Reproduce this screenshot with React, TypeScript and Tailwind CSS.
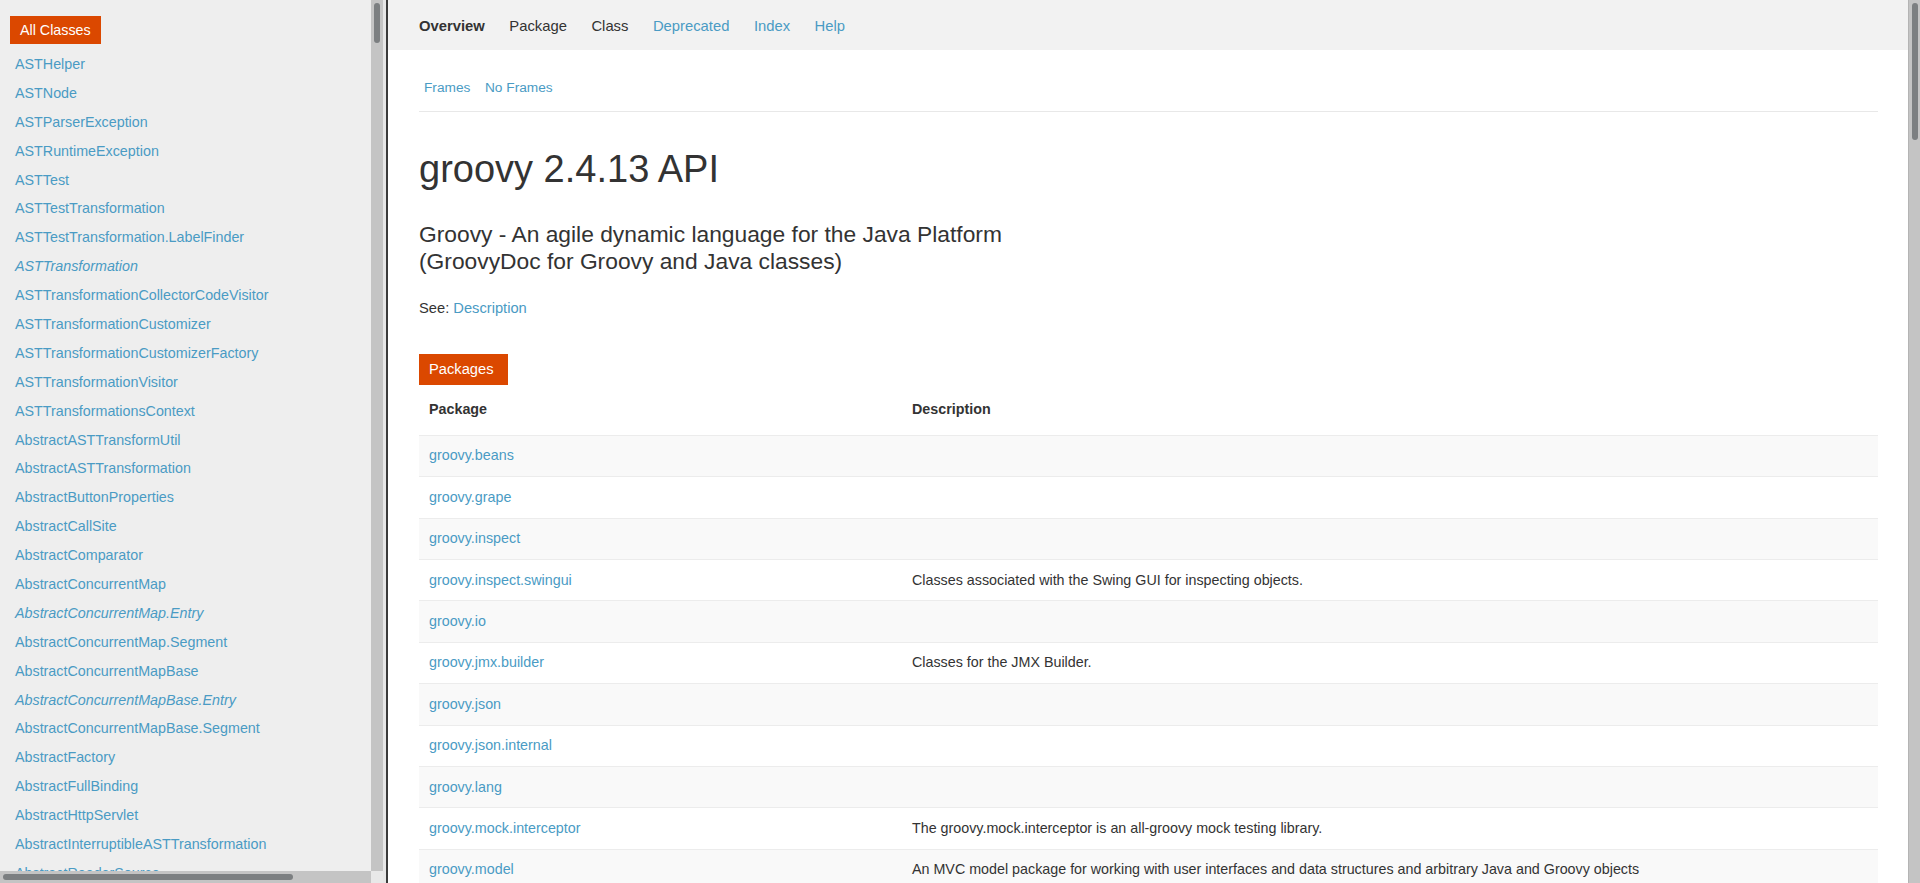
import React from "react";

type ClassItem = { name: string; italic?: boolean };

const classes: ClassItem[] = [
  { name: "ASTHelper" },
  { name: "ASTNode" },
  { name: "ASTParserException" },
  { name: "ASTRuntimeException" },
  { name: "ASTTest" },
  { name: "ASTTestTransformation" },
  { name: "ASTTestTransformation.LabelFinder" },
  { name: "ASTTransformation", italic: true },
  { name: "ASTTransformationCollectorCodeVisitor" },
  { name: "ASTTransformationCustomizer" },
  { name: "ASTTransformationCustomizerFactory" },
  { name: "ASTTransformationVisitor" },
  { name: "ASTTransformationsContext" },
  { name: "AbstractASTTransformUtil" },
  { name: "AbstractASTTransformation" },
  { name: "AbstractButtonProperties" },
  { name: "AbstractCallSite" },
  { name: "AbstractComparator" },
  { name: "AbstractConcurrentMap" },
  { name: "AbstractConcurrentMap.Entry", italic: true },
  { name: "AbstractConcurrentMap.Segment" },
  { name: "AbstractConcurrentMapBase" },
  { name: "AbstractConcurrentMapBase.Entry", italic: true },
  { name: "AbstractConcurrentMapBase.Segment" },
  { name: "AbstractFactory" },
  { name: "AbstractFullBinding" },
  { name: "AbstractHttpServlet" },
  { name: "AbstractInterruptibleASTTransformation" },
  { name: "AbstractReaderSource" },
];

const packages: [string, string][] = [
  ["groovy.beans", ""],
  ["groovy.grape", ""],
  ["groovy.inspect", ""],
  ["groovy.inspect.swingui", "Classes associated with the Swing GUI for inspecting objects."],
  ["groovy.io", ""],
  ["groovy.jmx.builder", "Classes for the JMX Builder."],
  ["groovy.json", ""],
  ["groovy.json.internal", ""],
  ["groovy.lang", ""],
  ["groovy.mock.interceptor", "The groovy.mock.interceptor is an all-groovy mock testing library."],
  ["groovy.model", "An MVC model package for working with user interfaces and data structures and arbitrary Java and Groovy objects"],
];

const font = "font-['Liberation_Sans',Arial,sans-serif]";

const LeftFrame = () => (
  <div className="w-[383px] h-full flex flex-col bg-[#eeeeee] shrink-0">
    <div className="flex flex-1 min-h-0">
      <div className="flex-1 overflow-hidden pt-[16px]">
        <div className="ml-[10px] inline-block bg-[#db4800] text-white text-[14.3px] leading-[28px] h-[28px] px-[10px]">
          All Classes
        </div>
        <ul className="mt-[6px] whitespace-nowrap">
          {classes.map((c) => (
            <li
              key={c.name}
              className={`h-[28.9px] leading-[28.9px] pl-[15px] text-[14.3px] text-[#4a9bc4] ${c.italic ? "italic" : ""}`}
            >
              {c.name}
            </li>
          ))}
        </ul>
      </div>
      <div className="w-[12px] bg-[#c4c4c4] pt-[3px] flex justify-center">
        <div className="w-[6px] h-[40px] rounded-full bg-[#7c7f81]" />
      </div>
    </div>
    <div className="h-[12px] flex">
      <div className="flex-1 bg-[#c4c4c4] pt-[3px] pl-[3px]">
        <div className="w-[290px] h-[6px] rounded-full bg-[#7c7f81]" />
      </div>
      <div className="w-[12px] bg-[#e8e8e8]" />
    </div>
  </div>
);

const Nav = () => (
  <div className="h-[50px] bg-[#f2f2f2] flex items-center gap-[24.5px] pl-[31px] pt-[3px] text-[14.8px]">
    <span className="font-bold text-[#333333]">Overview</span>
    <span className="text-[#333333]">Package</span>
    <span className="text-[#333333]">Class</span>
    <span className="text-[#4a9bc4]">Deprecated</span>
    <span className="text-[#4a9bc4]">Index</span>
    <span className="text-[#4a9bc4]">Help</span>
  </div>
);

const RightFrame = () => (
  <div className="flex-1 h-full flex min-w-0">
    <div className="flex-1 overflow-hidden bg-white text-[#333333]">
      <Nav />
      <div className="pl-[31px] pr-[30px]">
        <div className="pt-[28px] pb-[13px] border-b border-[#e8e8e8] flex gap-[14.6px] pl-[5px] text-[13.7px] leading-[20px] text-[#4a9bc4]">
          <span>Frames</span>
          <span>No Frames</span>
        </div>
        <h1 className="mt-[35px] text-[38px] leading-[44px] text-[#333333]">groovy 2.4.13 API</h1>
        <div className="mt-[30px] text-[22.8px] leading-[26.7px] text-[#333333]">
          <div>Groovy - An agile dynamic language for the Java Platform</div>
          <div>(GroovyDoc for Groovy and Java classes)</div>
        </div>
        <div className="mt-[23.5px] text-[14.7px] leading-[20px]">
          See: <span className="text-[#4a9bc4]">Description</span>
        </div>
        <div className="mt-[36px] inline-block bg-[#db4800] text-white text-[14.7px] h-[31px] leading-[31px] pl-[10px] pr-[14px]">
          Packages
        </div>
        <div className="text-[14.3px]">
          <div className="grid grid-cols-[483px_1fr] h-[50px] items-center font-bold">
            <div className="pl-[10px]">Package</div>
            <div className="pl-[10px]">Description</div>
          </div>
          {packages.map(([name, desc], i) => (
            <div
              key={name}
              className={`grid grid-cols-[483px_1fr] h-[41.4px] items-center border-t border-[#ececec] ${i % 2 === 0 ? "bg-[#f9f9f9]" : "bg-white"}`}
            >
              <div className="pl-[10px] text-[#4a9bc4]">{name}</div>
              <div className="pl-[10px] text-[#333333]">{desc}</div>
            </div>
          ))}
        </div>
      </div>
    </div>
    <div className="w-[12px] h-full bg-[#c4c4c4] border-l border-[#b4b4b4] pt-[3px] flex justify-center">
      <div className="w-[6px] h-[137px] rounded-full bg-[#7c7f81]" />
    </div>
  </div>
);

export default function App() {
  return (
    <div className={`w-[1920px] h-[883px] flex overflow-hidden ${font}`}>
      <LeftFrame />
      <div className="w-[5px] h-full flex shrink-0">
        <div className="w-[3px] bg-[#e6e6e6]" />
        <div className="w-[2px] bg-[#3a3a3a]" />
      </div>
      <RightFrame />
    </div>
  );
}
